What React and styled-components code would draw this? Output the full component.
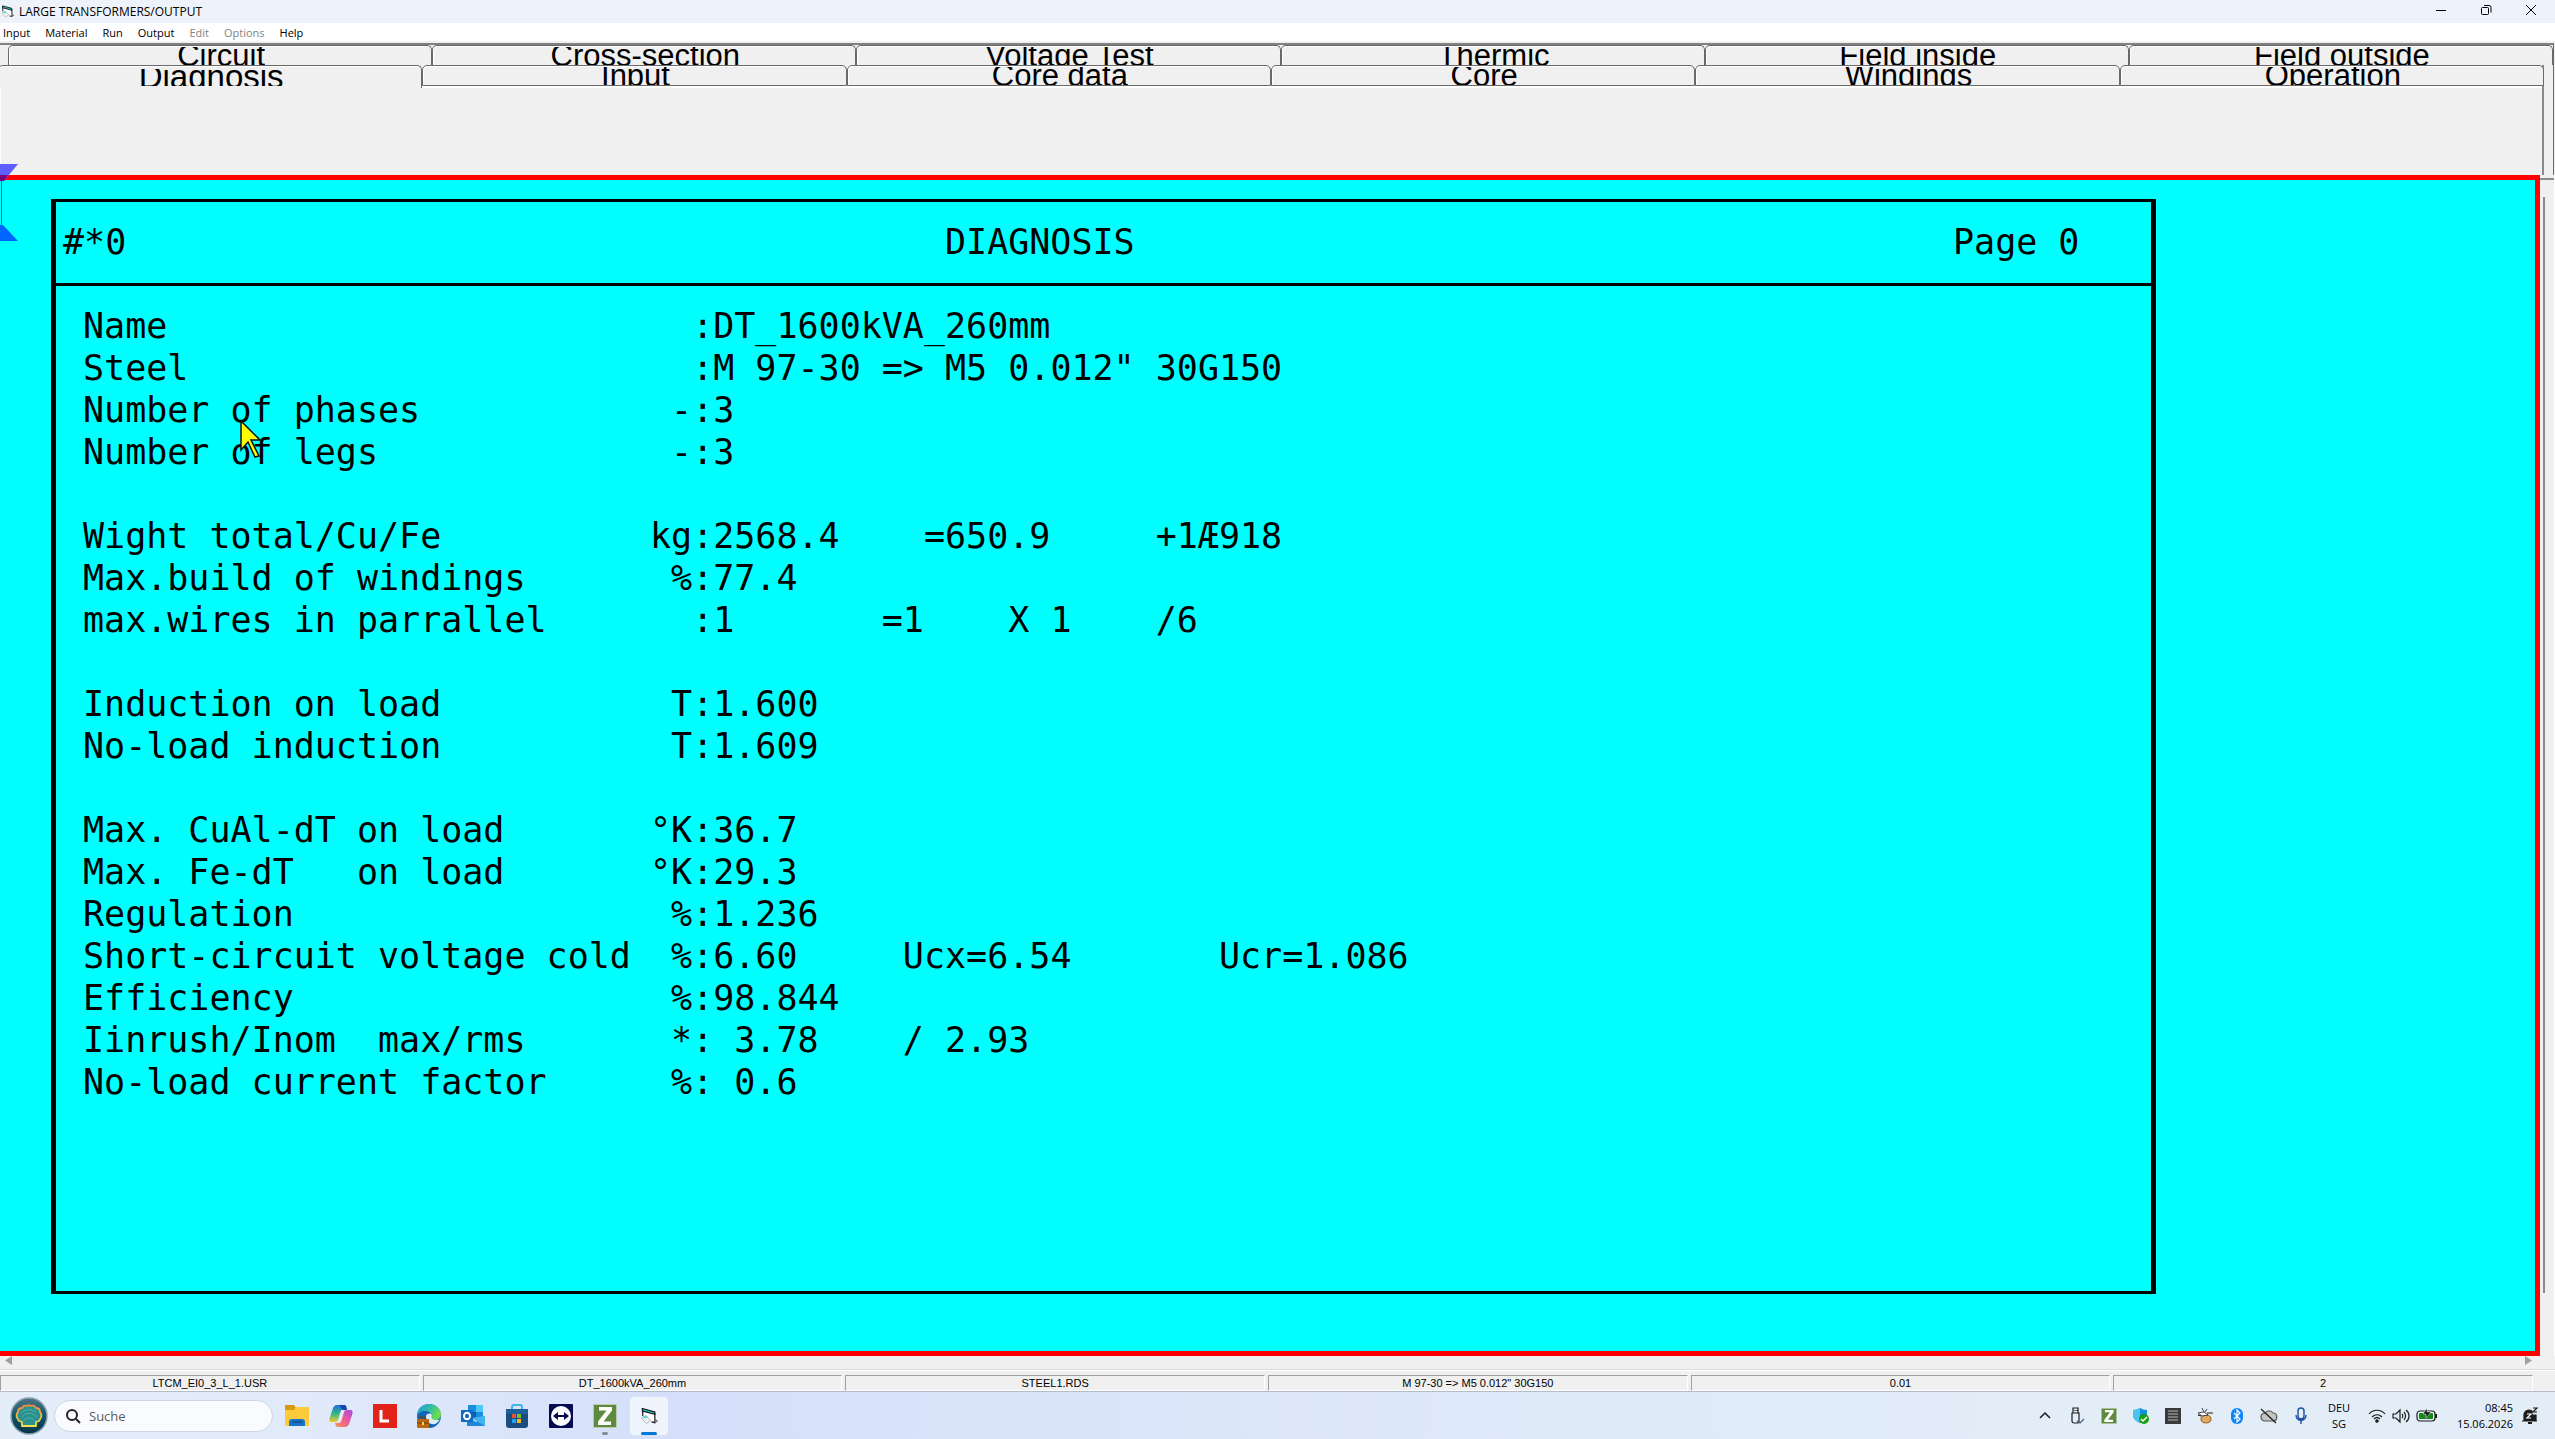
import React, { useState } from 'react';
import styled, { createGlobalStyle } from 'styled-components';

const menu = [
    { label: 'Input' },
    { label: 'Material' },
    { label: 'Run' },
    { label: 'Output' },
    { label: 'Edit', disabled: true },
    { label: 'Options', disabled: true },
    { label: 'Help' },
];
const backTabs = ['Circuit', 'Cross-section', 'Voltage Test', 'Thermic', 'Field inside', 'Field outside'];
const frontTabs = ['Diagnosis', 'Input', 'Core data', 'Core', 'Windings', 'Operation'];
// the values keep their blanks, the sheet is a fixed-pitch printout
const rows = [
    ['Name', '', 'DT_1600kVA_260mm'],
    ['Steel', '', 'M 97-30 => M5 0.012" 30G150'],
    ['Number of phases', '-', '3'],
    ['Number of legs', '-', '3'],
    null,
    ['Wight total/Cu/Fe', 'kg', '2568.4    =650.9     +1Æ918'],
    ['Max.build of windings', '%', '77.4'],
    ['max.wires in parrallel', '', '1       =1    X 1    /6'],
    null,
    ['Induction on load', 'T', '1.600'],
    ['No-load induction', 'T', '1.609'],
    null,
    ['Max. CuAl-dT on load', '°K', '36.7'],
    ['Max. Fe-dT   on load', '°K', '29.3'],
    ['Regulation', '%', '1.236'],
    ['Short-circuit voltage cold', '%', '6.60     Ucx=6.54       Ucr=1.086'],
    ['Efficiency', '%', '98.844'],
    ['Iinrush/Inom  max/rms', '*', ' 3.78    / 2.93'],
    ['No-load current factor', '%', ' 0.6'],
];
const status = ['LTCM_EI0_3_L_1.USR', 'DT_1600kVA_260mm', 'STEEL1.RDS', 'M 97-30 => M5 0.012" 30G150', '0.01', '2'];

const FormIcon = ({ size }) => (
    <svg width={size} height={size} viewBox="0 0 24 24">
        <path d="M4 3l15 4v13l-4-1V9L4 6z" fill="#fff" />
        <path d="M5 6l14 4v9l-5-2-9-4z" fill="#fff" />
        <path d="M4 3l15 4v3L4 6z" fill="#18c8c8" stroke="#111" strokeWidth="1.400" />
        <path d="M4.500 6v6M19 9v11l-4-1" fill="none" stroke="#111" strokeWidth="1.400" />
        <path d="M3 15l5-3 6 5-5 4z" fill="#f2f2f2" stroke="#a9a9a9" />
        <path d="M4 13l4-2 3 2-4 2z" fill="#5fd6d6" />
        <path d="M19 15l4 3-4 3z" fill="#777" />
    </svg>
);
const ZIcon = ({ size }) => (
    <svg width={size} height={size} viewBox="0 0 24 24">
        <rect x="0.5" y="0.5" width="23" height="23" fill="#5d8a3f" stroke="#b9cda9" />
        <path d="M6 3h13v3.5L10.500 17.500H18V21H5v-3.500L13.500 6.500H6z" fill="#fff" />
    </svg>
);
const Shell = () => (
    <svg width="38" height="38" viewBox="0 0 38 38">
        <defs>
            <linearGradient id="orb" x1="0" y1="0" x2="0" y2="1">
                <stop offset="0" stopColor="#4f7388" />
                <stop offset="0.5" stopColor="#12566a" />
                <stop offset="1" stopColor="#053248" />
            </linearGradient>
            <linearGradient id="shell" x1="0" y1="0" x2="0" y2="1">
                <stop offset="0" stopColor="#f08a3c" />
                <stop offset="1" stopColor="#f1e34a" />
            </linearGradient>
        </defs>
        <circle cx="19" cy="19" r="18" fill="url(#orb)" stroke="#8aa0ac" strokeWidth="1.500" />
        <path
            d="M12 29v-4l-3-1c-3-4-3-7-1-9 0-3 2-4 4-4 1-2 3-3 5-2 1-1 3-1 4 0 2-1 4 0 5 2 2 0 4 1 4 4 2 2 2 5-1 9l-3 1v4z"
            fill="#2b9090" stroke="url(#shell)" strokeWidth="1.800" strokeLinejoin="round"
        />
        <path d="M14 24c0-4 10-4 10 0M12 20c2-5 12-5 14 0M12 15c4-3 10-3 14 0" fill="none" stroke="#4fb0a8" />
    </svg>
);
const Folder = () => (
    <svg width="24" height="24" viewBox="0 0 24 24">
        <path d="M0 1h9l2 3h13v18H0z" fill="#d99a12" />
        <path d="M0 6h9l2-3h13v19H0z" fill="#fccb3c" />
        <path d="M4 22v-4c0-2 1-3 3-3h10c2 0 3 1 3 3v4z" fill="#1673c9" />
        <path d="M7 18h10" stroke="#0b4d90" strokeWidth="1.500" />
    </svg>
);
const Copilot = () => (
    <svg width="24" height="24" viewBox="0 0 24 24">
        <defs>
            <linearGradient id="cpa" x1="0" y1="0" x2="0" y2="1">
                <stop offset="0" stopColor="#1c6fe0" />
                <stop offset="0.500" stopColor="#2fb78a" />
                <stop offset="1" stopColor="#f3c628" />
            </linearGradient>
            <linearGradient id="cpb" x1="1" y1="0" x2="0" y2="1">
                <stop offset="0" stopColor="#a64be0" />
                <stop offset="0.500" stopColor="#ef5a95" />
                <stop offset="1" stopColor="#f79a4a" />
            </linearGradient>
        </defs>
        <path d="M8 1h7c2 0 2 1 3 4h-3c-2 0-3 1-4 4l-2 7c-1 2-2 2-4 2H3c-3 0-3-2-2-5L4 4c1-2 2-3 4-3z" fill="url(#cpa)" />
        <path d="M10 1h5c2 0 2 1 3 5h-4c-2 0-2-4-4-5z" fill="#1745b5" />
        <path d="M16 23H9c-2 0-2-1-3-4h3c2 0 3-1 4-4l2-7c1-2 2-2 4-2h2c3 0 3 2 2 5l-3 9c-1 2-2 3-4 3z" fill="url(#cpb)" />
    </svg>
);
const LexIcon = () => (
    <svg width="24" height="24" viewBox="0 0 24 24">
        <rect width="24" height="24" fill="#e2231a" />
        <path d="M8 6v11h8" fill="none" stroke="#fff" strokeWidth="3" />
    </svg>
);
const Edge = () => (
    <svg width="24" height="24" viewBox="0 0 24 24">
        <defs>
            <linearGradient id="edg" x1="0" y1="0" x2="1" y2="0.400">
                <stop offset="0" stopColor="#1f9bd8" />
                <stop offset="0.600" stopColor="#35c1a5" />
                <stop offset="1" stopColor="#6fdc4c" />
            </linearGradient>
        </defs>
        <circle cx="12" cy="12" r="12" fill="#1266b4" />
        <path d="M0 12C0 5 5 0 12 0s12 5 12 10c0 4-3 6-6 6-4 0-4-2-3-4 0-3-3-5-7-5-4 0-7 2-8 5z" fill="url(#edg)" />
        <path d="M9 12c1-3 5-3 6-1-1 3 0 5 4 5 2 0 3 0 4-1-2 4-5 6-8 5-4 0-6-4-6-8z" fill="#dcebf8" />
        <rect y="15" width="12" height="9" rx="1" fill="#b8690f" />
        <path d="M4 15v-2h4v2M0 19h12" fill="none" stroke="#6e3b05" strokeWidth="1.200" />
        <rect x="5" y="18" width="2" height="3" fill="#f7cf5e" />
    </svg>
);
const Outlook = () => (
    <svg width="24" height="24" viewBox="0 0 24 24">
        <rect x="7" y="1" width="15" height="14" fill="#1490df" />
        <path d="M15 1h7v7h-7z" fill="#50c8f5" />
        <path d="M7 8h8v7H7z" fill="#0f5ba8" />
        <path d="M6 13l9 5 9-6v10H6z" fill="#1f86d8" />
        <path d="M24 12v10L10 14z" fill="#41b3ee" />
        <rect y="6" width="12" height="12" rx="1" fill="#0b6bc4" />
        <ellipse cx="6" cy="12" rx="3" ry="3.300" fill="none" stroke="#fff" strokeWidth="2" />
    </svg>
);
const Store = () => (
    <svg width="24" height="24" viewBox="0 0 24 24">
        <path d="M7 6V3c0-1 1-2 2-2h6c1 0 2 1 2 2v3" fill="none" stroke="#3cb6ec" strokeWidth="2" />
        <path d="M1 5h22v16c0 2-1 3-3 3H4c-2 0-3-1-3-3z" fill="#1b4d80" />
        <path d="M1 5h22v5H1z" fill="#1f5f9c" />
        <rect x="7" y="10" width="4" height="4" fill="#f0532a" />
        <rect x="12" y="10" width="4" height="4" fill="#80bb28" />
        <rect x="7" y="15" width="4" height="4" fill="#22a5ec" />
        <rect x="12" y="15" width="4" height="4" fill="#fdb913" />
    </svg>
);
const Viewer = () => (
    <svg width="24" height="24" viewBox="0 0 24 24">
        <rect width="24" height="24" rx="1" fill="#060a50" />
        <circle cx="12" cy="12" r="10" fill="#fff" />
        <path d="M4 12l5-4v3h6V8l5 4-5 4v-3H9v3z" fill="#060a50" />
    </svg>
);
const Tray = ({ children, width = 18 }) => (
    <svg width={width} height="18" viewBox={`0 0 ${width} 18`} fill="none" stroke="#1d1d1d" strokeWidth="1.200">
        {children}
    </svg>
);
const trayIcons = [
    ['Hidden icons', <Tray><path d="M4 11l5-5 5 5" strokeWidth="1.500" /></Tray>],
    ['Remove hardware', <Tray><path d="M4 6h7v8c0 1-1 2-2 2H6c-1 0-2-1-2-2zM5 6V1h5v5M7 3v1M9 3v1" /><path d="M9 14l3 2 4-4" stroke="#44607e" /></Tray>],
    ['Scanner', <ZIcon size={16} />],
    ['Security', <Tray><path d="M8 1c2 1 4 2 7 2v5c0 4-3 6-7 8-4-2-7-4-7-8V3c3 0 5-1 7-2z" fill="#1490df" stroke="none" /><path d="M8 1v15c-4-2-7-4-7-8V3c3 0 5-1 7-2z" fill="#4cc2f1" stroke="none" /><circle cx="12" cy="12" r="5" fill="#13a10e" stroke="none" /><path d="M9 12l2 2 4-4" stroke="#fff" strokeWidth="1.500" /></Tray>],
    ['Memory', <Tray><rect x="1" y="1" width="16" height="16" fill="#3a3a3a" stroke="none" /><path d="M4 4h10M4 7h10M4 10h10M4 13h10" stroke="#b8b8b8" /></Tray>],
    ['Agent', <Tray><ellipse cx="10" cy="12" rx="5" ry="4" fill="#e0a860" stroke="#9a6a28" /><path d="M2 6l6-1 4 3-6 1zM6 1l2 4M11 2l-2 3" fill="#fff" strokeWidth="0.800" /><path d="M11 6h6M2 8l3 1" /></Tray>],
    ['Bluetooth', <Tray><rect x="3" y="1" width="12" height="16" rx="6" fill="#0a84ff" stroke="none" /><path d="M6 6l6 6-3 3V3l3 3-6 6" stroke="#fff" /></Tray>],
    ['Cloud', <Tray><path d="M5 14a4 4 0 010-8c2-3 6-3 8 0 5 0 5 8 0 8z" fill="#c4c4c4" stroke="#555" /><path d="M1 2l15 14" /></Tray>],
    ['Microphone', <Tray><path d="M6 4c0-4 6-4 6 0v5c0 4-6 4-6 0zM4 8c0 7 10 7 10 0M9 13v4" stroke="#1c4fa0" strokeWidth="1.400" /></Tray>],
];
const apps = [
    ['Explorer', <Folder />],
    ['Copilot', <Copilot />],
    ['Dictionary', <LexIcon />],
    ['Edge', <Edge />],
    ['Outlook', <Outlook />],
    ['Store', <Store />],
    ['Remote', <Viewer />],
    ['Scanner', <ZIcon size={24} />, 'open'],
    ['Transformers', <FormIcon size={20} />, 'active'],
];

function App() {
    const [tab, setTab] = useState('Diagnosis');
    const renderTab = (name) => (
        <Tab key={name} role="tab" aria-selected={tab === name} $on={tab === name} onClick={() => setTab(name)}>
            <TabLabel $on={tab === name}>{name}</TabLabel>
        </Tab>
    );
    return (
        <Window>
            <GlobalStyle />
            <TitleBar>
                <FormIcon size={15} />
                <Title>LARGE TRANSFORMERS/OUTPUT</Title>
                <WindowButton aria-label="Minimize"><svg width="12" height="12" fill="none" stroke="#000"><path d="M1 6.500h10" /></svg></WindowButton>
                <WindowButton aria-label="Restore"><svg width="12" height="12" fill="none" stroke="#000"><rect x="1.500" y="3.500" width="7" height="7" rx="1" /><path d="M4 1.500h5q2 0 2 2v5" /></svg></WindowButton>
                <WindowButton aria-label="Close"><svg width="12" height="12" fill="none" stroke="#000"><path d="M1 1l10 10M11 1L1 11" /></svg></WindowButton>
            </TitleBar>
            <MenuBar>
                {menu.map((item) => (
                    <MenuItem key={item.label} disabled={item.disabled}>{item.label}</MenuItem>
                ))}
            </MenuBar>
            <Tabs role="tablist">
                <BackRow>{backTabs.map(renderTab)}</BackRow>
                <Front>
                    <FrontRow>{frontTabs.map(renderTab)}</FrontRow>
                    <Panel />
                </Front>
            </Tabs>
            <Work>
                <Canvas>
                    <Sheet>
                        <SheetHead>
                            <span>#*0</span>
                            <SheetTitle>DIAGNOSIS</SheetTitle>
                            <span>Page 0</span>
                        </SheetHead>
                        <Report>
                            <tbody>
                                {rows.map((row, i) => (
                                    <tr key={i}>
                                        <Label scope="row">{row && row[0]}</Label>
                                        <Unit>{row && row[1]}</Unit>
                                        <td>{row && `:${row[2]}`}</td>
                                    </tr>
                                ))}
                            </tbody>
                        </Report>
                    </Sheet>
                </Canvas>
                <Side>
                    <SideStub />
                    <SideLine />
                </Side>
                <Marks width="20" height="78">
                    <path d="M0 0h18L4 17H0z" fill="#5f5fff" />
                    <path d="M0 11h8L4 17H0z" fill="#7a0078" />
                    <path d="M1.500 17v44" stroke="#c03030" />
                    <path d="M0 61h3l15 16H0z" fill="#0066ff" />
                </Marks>
                <Pointer width="22" height="40">
                    <path d="M1 1l19 19h-9l8 16-4 1-7-15-7 8z" fill="#ff0" stroke="#111" strokeWidth="1.500" />
                </Pointer>
            </Work>
            <Scroll>
                <Arrow aria-label="Scroll left"><svg width="7" height="9"><path d="M7 0v9L0 4.500z" fill="#a0a0a0" /></svg></Arrow>
                <Arrow aria-label="Scroll right"><svg width="7" height="9"><path d="M0 0v9l7-4.500z" fill="#a0a0a0" /></svg></Arrow>
            </Scroll>
            <StatusBar>
                {status.map((text) => <StatusCell key={text}>{text}</StatusCell>)}
            </StatusBar>
            <Taskbar>
                <Start aria-label="Start"><Shell /></Start>
                <SearchBox>
                    <svg width="16" height="16" fill="none" stroke="#222" strokeWidth="2"><circle cx="7" cy="7" r="5" /><path d="M11 11l4 4" /></svg>
                    <SearchInput aria-label="Suche" placeholder="Suche" />
                </SearchBox>
                {apps.map(([name, icon, state]) => (
                    <AppButton key={name} aria-label={name} $state={state}>
                        <AppFace $state={state}>{icon}</AppFace>
                    </AppButton>
                ))}
                <Spacer />
                {trayIcons.map(([name, icon]) => (
                    <TrayButton key={name} aria-label={name}>{icon}</TrayButton>
                ))}
                <Language>DEU<br />SG</Language>
                <Quick aria-label="Network, sound, battery">
                    <Tray><path d="M1 7c4-5 12-5 16 0M4 10c3-3 7-3 10 0M6 12c2-2 4-2 6 0" /><circle cx="9" cy="14" r="1.200" fill="#1d1d1d" /></Tray>
                    <Tray><path d="M1 7h3l4-4v12l-4-4H1zM10 7c1 1 1 3 0 4M12 5c2 2 2 6 0 8M14 3c4 3 4 9 0 12" /></Tray>
                    <Tray width={22}><rect x="1" y="4" width="18" height="10" rx="3" /><rect x="3" y="6" width="14" height="6" rx="1" fill="#138a13" stroke="none" /><path d="M20 7v4" strokeWidth="2" /><path d="M11 1l-4 6h3v4l5-6h-4z" fill="#111" stroke="#fff" strokeWidth="0.500" /></Tray>
                </Quick>
                <Clock>08:45<br />15.06.2026</Clock>
                <Tray><path d="M3 14V8c0-4 4-6 8-4v4h4v6zM1 14h15" fill="#1d1d1d" /><path d="M7 16h4" strokeWidth="2" /><path d="M6 7h4l-4 4h4" stroke="#fff" /><path d="M12 1h4l-4 4h4" /></Tray>
            </Taskbar>
        </Window>
    );
}

const GlobalStyle = createGlobalStyle`
    * {
        box-sizing: border-box;
    }
    body {
        margin: 0;
        background: #f0f0f0;
        color: #000;
        font-family: "Open Sans", "Noto Sans", sans-serif;
        font-size: 11px;
    }
    button {
        padding: 0;
        border: 0;
        background: none;
        color: inherit;
        font: inherit;
    }
    svg {
        display: block;
        flex: none;
    }
`;
const Window = styled.div`
    display: flex;
    flex-direction: column;
    min-height: 100vh;
`;
const TitleBar = styled.header`
    display: flex;
    align-items: center;
    height: 23px;
    padding-right: 2px;
    background: #eef3fb;
`;
const Title = styled.h1`
    flex: 1;
    margin: 0 0 0 4px;
    font-size: 12px;
    font-weight: 400;
`;
const WindowButton = styled.button`
    display: flex;
    align-items: center;
    justify-content: center;
    width: 45px;
    height: 20px;
    align-self: flex-start;
`;
const MenuBar = styled.nav`
    display: flex;
    gap: 15px;
    height: 18px;
    padding-left: 3px;
    background: #fff;
`;
const MenuItem = styled.button`
    line-height: 20px;
    &:disabled {
        color: #848484;
    }
`;
const Tabs = styled.div`
    margin: 2px 1px 0 0;
    border-top: 2px solid #808080;
    border-right: 1px solid #696969;
`;
const BackRow = styled.div`
    display: flex;
    padding-left: 8px;
`;
const Front = styled.div`
    margin-right: 9px;
    border-right: 2px solid #8a8a8a;
`;
const FrontRow = styled.div`
    display: flex;
    height: 21px;
    margin: 0 -2px;
`;
const Tab = styled.button`
    position: relative;
    display: flex;
    justify-content: center;
    align-items: flex-start;
    flex: 1;
    height: ${(props) => (props.$on ? 23 : 21)}px;
    padding-top: ${(props) => (props.$on ? 2 : 0)}px;
    border: 1px solid #696969;
    border-bottom-width: ${(props) => (props.$on ? 0 : 1)}px;
    border-radius: 5px 5px 0 0;
    background: #f0f0f0;
    box-shadow: inset 1px 1px 0 #fff;
    z-index: ${(props) => (props.$on ? 1 : 0)};
    ${BackRow} & {
        height: 20px;
        border-bottom: 0;
    }
`;
const TabLabel = styled.span`
    display: block;
    height: ${(props) => (props.$on ? 17 : 18)}px;
    margin-top: 1px;
    padding-left: 2px;
    overflow: hidden;
    font-family: "Liberation Sans", Arial, sans-serif;
    font-size: ${(props) => (props.$on ? 33 : 31)}px;
    line-height: ${(props) => (props.$on ? 16 : 18)}px;
`;
const Panel = styled.div`
    height: 89px;
    border-top: 2px solid #fff;
    border-left: 1px solid #fff;
`;
const Work = styled.main`
    position: relative;
    display: flex;
    flex: 1;
`;
const Canvas = styled.div`
    display: flex;
    flex: 1;
    padding: 19px 379px 57px 51px;
    border: 5px solid #f00;
    border-left: 0;
    background: #0ff;
`;
const Sheet = styled.section`
    flex: 1;
    border: solid #000;
    border-width: 3px 5px;
    font-family: "DejaVu Sans Mono", "Liberation Mono", monospace;
    font-size: 35px;
    line-height: 42px;
    white-space: pre;
`;
const SheetHead = styled.div`
    display: grid;
    grid-template-columns: 882fr 1008fr 198fr;
    padding: 19px 0 20px 7px;
    border-bottom: 3px solid #000;
`;
const SheetTitle = styled.h2`
    margin: 0;
    font-size: 35px;
    font-weight: 400;
`;
const Report = styled.table`
    margin: 19px 0 0 27px;
    border-collapse: collapse;
    td,
    th {
        height: 42px;
        padding: 0;
    }
`;
const Label = styled.th`
    width: 567px;
    font-weight: 400;
    text-align: left;
`;
const Unit = styled.td`
    width: 42px;
    text-align: right;
`;
const Side = styled.div`
    display: flex;
    flex-direction: column;
    width: 15px;
    border-right: 1px solid #fff;
`;
const SideStub = styled.div`
    height: 5px;
    border-bottom: 2px solid #8a8a8a;
`;
const SideLine = styled.div`
    flex: 1;
    width: 2px;
    margin: 17px 0 63px 3px;
    background: #8a8a8a;
`;
const Marks = styled.svg`
    position: absolute;
    top: -11px;
    left: 0;
`;
const Pointer = styled.svg`
    position: absolute;
    top: 245px;
    left: 240px;
`;
const Scroll = styled.div`
    display: flex;
    justify-content: space-between;
    height: 14px;
    padding: 0 23px 0 5px;
    border-bottom: 1px solid #dcdcdc;
`;
const Arrow = styled.button`
    height: 9px;
`;
const StatusBar = styled.footer`
    display: grid;
    grid-template-columns: repeat(6, 1fr);
    gap: 3px;
    padding: 4px 22px 0 0;
    border-top: 1px solid #fff;
`;
const StatusCell = styled.div`
    height: 16px;
    border: 1px solid #fff;
    border-top-color: #a0a0a0;
    border-left-color: #a0a0a0;
    font-family: "Liberation Sans", Arial, sans-serif;
    font-size: 11px;
    line-height: 15px;
    text-align: center;
    white-space: nowrap;
`;
const Taskbar = styled.div`
    display: flex;
    align-items: center;
    height: 48px;
    padding: 0 16px 0 10px;
    border-top: 1px solid #b4bcc8;
    background: linear-gradient(90deg, #e4eef9 0%, #e1eafa 12%, #d5dffa 26%, #dde7f9 50%, #e2edf8 80%);
`;
const Start = styled.button`
    width: 38px;
    height: 38px;
`;
const SearchBox = styled.label`
    display: flex;
    align-items: center;
    gap: 8px;
    width: 219px;
    height: 32px;
    margin: 0 2px 0 6px;
    padding-left: 10px;
    border: 1px solid #cdd7e4;
    border-radius: 16px;
    background: #f9fbfe;
`;
const SearchInput = styled.input`
    width: 160px;
    padding: 0;
    border: 0;
    outline: 0;
    background: none;
    font-family: inherit;
    font-size: 13px;
    &::placeholder {
        color: #5c5c5c;
        opacity: 1;
    }
`;
const AppButton = styled.button`
    position: relative;
    display: flex;
    justify-content: center;
    width: 44px;
    &::after {
        content: "";
        display: ${(props) => (props.$state ? 'block' : 'none')};
        position: absolute;
        bottom: 0;
        width: ${(props) => (props.$state === 'active' ? 16 : 6)}px;
        height: 3px;
        border-radius: 2px;
        background: ${(props) => (props.$state === 'active' ? '#0078d4' : '#848c98')};
    }
`;
const AppFace = styled.span`
    display: flex;
    align-items: center;
    justify-content: center;
    width: 38px;
    height: 38px;
    border-radius: 4px;
    background: ${(props) => (props.$state === 'active' ? '#f0f4fd' : 'none')};
`;
const Spacer = styled.div`
    flex: 1;
`;
const TrayButton = styled.button`
    display: flex;
    align-items: center;
    justify-content: center;
    width: 32px;
    height: 32px;
`;
const Language = styled.button`
    width: 44px;
    line-height: 16px;
`;
const Quick = styled.button`
    display: flex;
    gap: 6px;
    padding: 0 7px;
`;
const Clock = styled.time`
    width: 68px;
    margin-right: 8px;
    line-height: 16px;
    text-align: right;
`;

export default App;
